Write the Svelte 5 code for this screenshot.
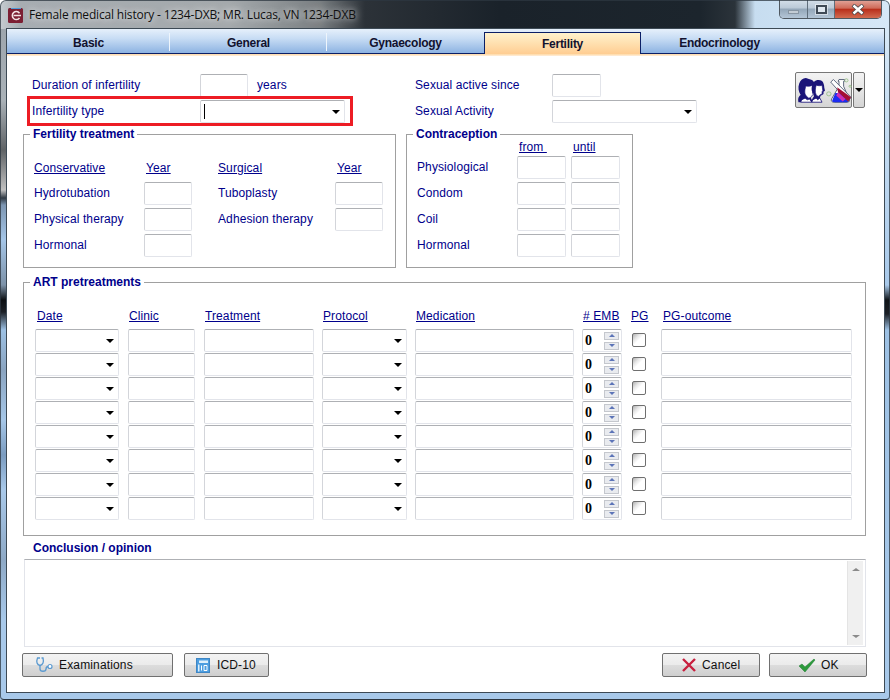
<script lang="ts">
	const treatments = [
		{ name: 'Hydrotubation', surgical: 'Tuboplasty' },
		{ name: 'Physical therapy', surgical: 'Adhesion therapy' },
		{ name: 'Hormonal', surgical: '' }
	];
	const methods = ['Physiological', 'Condom', 'Coil', 'Hormonal'];
	const tabs = ['Basic', 'General', 'Gynaecology', 'Fertility', 'Endocrinology'];
	const artRows = Array.from({ length: 8 }, (_, i) => i);
</script>

{#snippet combo(extra = '')}
	<div class="field combo {extra}"><span class="arrow"></span></div>
{/snippet}

<div class="window">
	<header class="titlebar">
		<svg class="appicon" width="16" height="16" viewBox="0 0 16 16">
			<rect x="0" y="0" width="15" height="15" rx="1.5" fill="#7c1f33" />
			<path d="M3 0h10v1H3z" fill="#4f9bd8" />
			<path d="M11.5 5.2A4 4 0 1 0 11.5 10" fill="none" stroke="#f3e4e6" stroke-width="1.5" />
			<path d="M5.5 7.6H13" stroke="#f3e4e6" stroke-width="1.5" />
		</svg>
		<span class="title">Female medical history - 1234-DXB; MR. Lucas, VN 1234-DXB</span>
		<div class="winbtns">
			<div class="wb min"><span></span></div>
			<div class="wb max"><span></span></div>
			<div class="wb close">
				<svg width="16" height="11" viewBox="0 0 16 11">
					<path d="M3 1l10 9M13 1L3 10" stroke="#47494d" stroke-width="4" />
					<path d="M3.5 1.5l9 8M12.5 1.5l-9 8" stroke="#fff" stroke-width="2.4" />
				</svg>
			</div>
		</div>
	</header>

	<div class="client">
		<nav class="tabs">
			{#each tabs as tab}
				<div class="tab" class:active={tab === 'Fertility'}>{tab}</div>
			{/each}
		</nav>
		<div class="tabline"></div>

		<section class="top">
			<div class="top-left">
				<div class="row">
					<span class="label w168">Duration of infertility</span>
					<div class="field w48"></div>
					<span class="label years">years</span>
				</div>
				<div class="row">
					<span class="label w168">Infertility type</span>
					<div class="field combo w145"><i class="caret"></i><span class="arrow"></span></div>
				</div>
				<div class="highlight"></div>
			</div>
			<div class="top-right">
				<div class="row">
					<span class="label w137">Sexual active since</span>
					<div class="field w49"></div>
				</div>
				<div class="row">
					<span class="label w137">Sexual Activity</span>
					<div class="field combo w145"><span class="arrow"></span></div>
				</div>
			</div>
			<div class="iconbtn">
				<svg width="28" height="26" viewBox="0 0 38 32" preserveAspectRatio="none">
					<path d="M2 31c-1-5 0-7 3-9-3-4-4-9-2-14 2-5 7-8 12-6 3 1 6 1 8 4 1 3 0 6 1 9l-2 1c1 3 0 5-3 6l-2 2c2 2 4 5 4 7z" fill="#1a1478" />
					<path d="M12 11c4 1 7 0 9-1l2 8-2 1 1 3-2 1-1 2-3 1c-2-1-4-3-5-5-1-3 0-7 1-10z" fill="#fff" stroke="#1a1478" stroke-width=".8" />
					<path d="M5 31c1-3 3-4 6-5l3 2 3-1 3 4z" fill="#fff" stroke="#1a1478" />
					<path d="M23 6c3-3 8-3 11-1 2 2 3 5 3 8l1 4-2 1v3l-2 1-2 1-1 3 3 5H20c0-3 1-5 3-7l-1-4c-3-2-3-10 1-14z" fill="#1a1478" />
					<path d="M26 10c3 1 6 1 8 0l1 7-1 1v3l-3 1-2 2-3-2c-2-4-1-8 0-12z" fill="#fff" stroke="#1a1478" stroke-width=".8" />
					<path d="M20 31c1-3 3-4 6-5l2 2 3-2 3 5z" fill="#fff" stroke="#1a1478" />
				</svg>
				<svg class="flask" width="24" height="27" viewBox="0 0 26 32" preserveAspectRatio="none">
					<path d="M13 3h6v2h-1v6l6 15c1 2 0 4-2 4H8c-3 0-4-2-3-4l8-15V5h-1z" fill="#fff" stroke="#3a4660" stroke-width=".9" />
					<path d="M9 19h10l4 8c1 2 0 3-2 3H8c-2 0-3-1-2-3z" fill="#1c2cf0" />
					<path d="M4 6l3-3 19 21-3 5z" fill="#fff" stroke="#3a4660" stroke-width=".9" />
					<path d="M11 12l15 12-3 5-11-11z" fill="#a30f33" />
					<path d="M12 18l8 8-3 3-7-7z" fill="#cf2fb2" />
					<circle cx="2" cy="20" r="2.4" fill="none" stroke="#98c088" />
					<circle cx="21" cy="4" r="1.8" fill="none" stroke="#98c088" />
					<circle cx="25" cy="11" r="1.2" fill="none" stroke="#98c088" />
				</svg>
			</div>
			<div class="iconbtn drop"><span class="arrow"></span></div>
		</section>

		<section class="groups">
			<fieldset class="fert">
				<legend>Fertility treatment</legend>
				<div class="fert-grid">
					<span class="label head">Conservative</span>
					<span class="label head pad">Year</span>
					<span class="label head">Surgical</span>
					<span class="label head pad">Year</span>
					{#each treatments as t}
						<span class="label">{t.name}</span>
						<div class="field"></div>
						<span class="label">{t.surgical}</span>
						{#if t.surgical}
							<div class="field"></div>
						{:else}
							<span></span>
						{/if}
					{/each}
				</div>
			</fieldset>
			<fieldset class="contra">
				<legend>Contraception</legend>
				<div class="contra-grid">
					<span></span>
					<span class="label head pad">from&nbsp;</span>
					<span class="label head pad">until</span>
					{#each methods as m}
						<span class="label">{m}</span>
						<div class="field"></div>
						<div class="field"></div>
					{/each}
				</div>
			</fieldset>
		</section>

		<fieldset class="art">
			<legend>ART pretreatments</legend>
			<div class="art-grid">
				<span class="label head pad">Date</span>
				<span class="label head pad nudge">Clinic</span>
				<span class="label head pad nudge">Treatment</span>
				<span class="label head pad nudge">Protocol</span>
				<span class="label head pad nudge">Medication</span>
				<span class="label head pad nudge">#&nbsp;EMB</span>
				<span class="label head pad">PG</span>
				<span class="label head pad">PG-outcome</span>
				{#each artRows as row (row)}
					{@render combo('w84')}
					<div class="field w67"></div>
					<div class="field w110"></div>
					{@render combo('w85')}
					<div class="field w159"></div>
					<div class="field spin">
						<b>0</b>
						<div class="spinbtns">
							<span class="up"></span>
							<span class="down"></span>
						</div>
					</div>
					<div class="check"></div>
					<div class="field w191"></div>
				{/each}
			</div>
		</fieldset>

		<div class="conclabel">Conclusion / opinion</div>
		<div class="textarea">
			<div class="scroll">
				<span class="sup"></span>
				<span class="sdown"></span>
			</div>
		</div>

		<footer class="actions">
			<button class="btn exam" type="button">
				<svg width="18" height="16" viewBox="0 0 18 16">
					<path d="M5 1H2.5C1 5 2 8 5 8.5 8 8 9 5 8 1H6.5" fill="none" stroke="#5b9ad0" stroke-width="1.3" />
					<path d="M5 8.5V12c0 3 6 3 6 0 0-2 1-2.5 2.5-2.5" fill="none" stroke="#5b9ad0" stroke-width="1.3" />
					<circle cx="15" cy="9.5" r="2" fill="#fff" stroke="#5b9ad0" stroke-width="1.2" />
				</svg>
				Examinations
			</button>
			<button class="btn icd" type="button">
				<svg width="14" height="15" viewBox="0 0 14 15">
					<rect x=".5" y=".5" width="13" height="14" fill="#4d9ee0" stroke="#3f86c4" />
					<rect x="3" y="2.5" width="9" height="2.5" fill="#dff0fb" />
					<rect x="2" y="6.5" width="1.5" height="7" fill="#dff0fb" />
					<path d="M5.5 7.5v5M8 7.5h3v5H8z" fill="none" stroke="#fff" />
				</svg>
				ICD-10
			</button>
			<span class="spacer"></span>
			<button class="btn cancel" type="button">
				<svg width="14" height="14" viewBox="0 0 14 14">
					<path d="M1 1l12 12M13 1L1 13" stroke="#c8203f" stroke-width="2.4" />
				</svg>
				Cancel
			</button>
			<button class="btn ok" type="button">
				<svg width="18" height="14" viewBox="0 0 18 14">
					<path d="M1 8l3-2 3 3 9-8 1 1L7 14z" fill="#2d9a3c" stroke="#1e7d30" stroke-width=".5" />
				</svg>
				OK
			</button>
		</footer>
	</div>
</div>

<style>
	:global(body) {
		margin: 0;
	}

	.window {
		position: relative;
		box-sizing: border-box;
		width: 890px;
		height: 700px;
		overflow: hidden;
		padding: 0 6px 7px 7px;
		border-radius: 6px 6px 0 0;
		font-family: 'Liberation Sans', Arial, sans-serif;
		font-size: 12px;
		color: #00008b;
		background-color: #a8c9ea;
		background-repeat: no-repeat;
		background-position: left top, right top;
		background-size: 7px 100%, 7px 100%;
		background-image:
			linear-gradient(180deg,
				#9ea6ad 30px, #aab2b8 100px, #5f6366 150px, #c0c0c0 190px, #303a44 198px,
				#7d96b2 205px, #a5c6e8 240px, #7d92a8 285px, #0c0f12 300px, #1c2026 312px,
				#9dc1e4 330px, #8aa4c0 370px, #a6c7e8 420px, #7b9cc0 455px, #a9c9ea 490px,
				#8ea9c6 560px, #a8c9ea 620px),
			linear-gradient(180deg,
				#d6e8f7 30px, #b9d4ee 200px, #a8c9ea 285px, #101418 300px, #1c2026 314px,
				#9dc1e4 330px, #a8c9ea 700px);
	}

	.window::after {
		content: '';
		position: absolute;
		inset: 0;
		border: 1px solid rgba(45, 55, 65, .75);
		border-bottom-color: #2d3741;
		border-radius: 6px 6px 4px 4px;
		pointer-events: none;
	}

	.titlebar {
		display: flex;
		align-items: flex-start;
		height: 29px;
		margin: 0 -6px 0 -7px;
		padding-left: 8px;
		background: linear-gradient(90deg,
			#c6ccd1 0, #a7adb2 20px, #a4a9ac 230px, #7a7f82 320px, #2c3238 365px,
			#1a222a 500px, #1c252d 700px, #2b333a 735px, #c7ddf0 755px, #d6e8f7 890px);
	}

	.appicon {
		margin-top: 8px;
		flex: none;
	}

	.title {
		margin: 7px 0 0 5px;
		font-family: 'Open Sans', 'Noto Sans', sans-serif;
		font-size: 12px;
		line-height: 16px;
		color: #101010;
		letter-spacing: -.17px;
		white-space: nowrap;
		text-shadow: 0 0 6px rgba(255,255,255,.7), 0 0 10px rgba(255,255,255,.5);
	}

	.winbtns {
		display: flex;
		margin-left: auto;
		margin-right: 8px;
		height: 19px;
		border: 1px solid #4f5860;
		border-top: 0;
		border-radius: 0 0 5px 5px;
		overflow: hidden;
		box-sizing: border-box;
	}

	.wb {
		display: flex;
		align-items: center;
		justify-content: center;
		box-sizing: border-box;
		height: 100%;
		background: linear-gradient(180deg, #d4dfe9 0, #bac9d7 45%, #93a6b8 50%, #b4c6d6 100%);
		border-right: 1px solid #5f6e7b;
	}

	.min { width: 28px; }
	.min span { width: 11px; height: 4px; margin-top: 5px; background: #c3ccd4; border: 1px solid #8795a2; box-sizing: border-box; }
	.max { width: 27px; }
	.max span { width: 11px; height: 9px; box-sizing: border-box; border: 2px solid #3f4a55; background: #dfe7ee; box-shadow: 0 0 0 1px rgba(255,255,255,.5); }
	.close {
		width: 46px;
		border-right: 0;
		background: linear-gradient(180deg, #e3a79c 0, #cf6b59 45%, #b9301c 52%, #d26b50 100%);
	}

	.client {
		height: 663px;
		background: #fff;
		box-shadow: 0 0 0 1px #3d4a55;
		position: relative;
	}

	.tabs {
		display: flex;
		height: 24px;
		background: linear-gradient(180deg, #e6f0fb 0, #c7dcf4 40%, #8db3e2 100%);
		border-bottom: 1px solid #0b1f66;
		box-sizing: content-box;
	}

	.tab {
		position: relative;
		box-sizing: border-box;
		width: 157px;
		display: flex;
		align-items: center;
		justify-content: center;
		font-weight: bold;
		font-size: 12px;
		letter-spacing: -.25px;
		color: #12122e;
		padding-top: 3px;
	}

	.tab:first-child { width: 163px; }

	.tab:not(.active):not(:last-child)::after {
		content: '';
		position: absolute;
		right: 0;
		top: 4px;
		bottom: 2px;
		width: 1px;
		background: #eef5fc;
	}

	.tab:nth-child(3)::after { display: none; }

	.tab.active {
		margin: 3px 0 -1px;
		height: 22px;
		padding-top: 0;
		border: 1px solid #0b1f66;
		border-bottom: 0;
		background: linear-gradient(180deg, #fff2cc 0, #ffcd92 100%);
	}

	.tabline {
		height: 2px;
		background: linear-gradient(180deg, #ffd9a3, #ffeedd);
	}

	.top {
		display: flex;
		align-items: flex-start;
		padding: 18px 0 0 25px;
	}

	.top-left {
		position: relative;
		width: 383px;
		flex: none;
	}

	.top-right {
		width: 380px;
		flex: none;
	}

	.row {
		display: flex;
		align-items: center;
		height: 23px;
		margin-bottom: 3px;
	}

	.label {
		padding-bottom: 2px;
		line-height: 14px;
		letter-spacing: .1px;
		white-space: nowrap;
	}

	.w168 { width: 168px; }
	.w137 { width: 137px; }
	.years { margin-left: 9px; }

	.highlight {
		position: absolute;
		left: -5px;
		top: 22px;
		width: 326px;
		height: 30px;
		box-sizing: border-box;
		border: 3px solid #ed1c24;
		pointer-events: none;
	}

	.field {
		box-sizing: border-box;
		height: 23px;
		background: #fff;
		border: 1px solid #e2e4ea;
		border-top-color: #aeb0b4;
		border-left-color: #d3d5da;
		border-radius: 2px;
	}

	.w48 { width: 48px; }
	.w49 { width: 49px; }
	.w67 { width: 67px; }
	.w84 { width: 84px; }
	.w85 { width: 85px; }
	.w110 { width: 110px; }
	.w145 { width: 145px; }
	.w159 { width: 159px; }
	.w191 { width: 191px; }

	.combo {
		position: relative;
		display: flex;
		align-items: center;
		justify-content: flex-end;
		padding-right: 4px;
	}

	.arrow {
		width: 0;
		height: 0;
		border: 4px solid transparent;
		border-top: 4px solid #000;
		border-bottom: 0;
	}

	.caret {
		position: absolute;
		left: 3px;
		top: 3px;
		width: 1px;
		height: 15px;
		background: #000;
	}

	.iconbtn {
		box-sizing: border-box;
		width: 57px;
		height: 36px;
		margin-top: -2px;
		display: flex;
		align-items: center;
		padding-left: 1px;
		border: 1px solid #777;
		border-radius: 2px;
		background: linear-gradient(180deg, #f3f3f3 0, #e6e6e6 50%, #d4d4d4 100%);
	}

	.iconbtn svg {
		flex: none;
		overflow: visible;
	}

	.flask {
		margin-left: 2px;
	}

	.iconbtn.drop {
		width: 12px;
		margin-left: 1px;
		padding: 0;
		justify-content: center;
	}

	.groups {
		display: flex;
		gap: 10px;
		margin: 1px 0 0 16px;
	}

	fieldset {
		box-sizing: border-box;
		margin: 0;
		padding: 0;
		min-width: 0;
		border: 1px solid #a0a0a0;
	}

	legend {
		margin-left: 6px;
		padding: 0 3px;
		font-weight: bold;
		font-size: 12px;
		line-height: 14px;
		color: #00008b;
	}

	.fert {
		width: 373px;
		height: 141px;
		padding-top: 15px;
	}

	.fert-grid {
		display: grid;
		grid-template-columns: 110px 48px 143px 48px;
		grid-auto-rows: 23px;
		row-gap: 3px;
		align-items: center;
		margin-left: 10px;
	}

	.fert-grid > :nth-child(4n + 3) {
		margin-left: 26px;
	}

	.fert-grid .field {
		width: 48px;
	}

	.head {
		padding-bottom: 0;
		text-decoration: underline;
	}

	.pad {
		padding-left: 2px;
	}

	.pad.nudge {
		padding-left: 1px;
	}

	.contra {
		width: 227px;
		height: 141px;
	}

	.contra-grid {
		display: grid;
		grid-template-columns: 95px 49px 49px;
		column-gap: 5px;
		grid-template-rows: 13px repeat(4, 23px);
		row-gap: 3px;
		align-items: center;
		margin: -1px 0 0 10px;
	}

	.art {
		width: 843px;
		height: 261px;
		margin: 7px 0 0 16px;
		padding-top: 21px;
	}

	.art-grid {
		display: grid;
		grid-template-columns: 93px 76px 118px 93px 167px 47px 32px 191px;
		grid-template-rows: 18px repeat(8, 23px);
		row-gap: 1px;
		align-items: center;
		margin-left: 11px;
	}

	.art-grid .head {
		align-self: start;
		margin-top: -1px;
	}

	.spin {
		width: 40px;
		display: flex;
		align-items: center;
		justify-content: space-between;
		padding: 0 2px;
		font-family: 'Liberation Serif', serif;
		font-size: 14px;
		color: #000;
	}

	.spinbtns {
		display: flex;
		flex-direction: column;
		gap: 2px;
	}

	.up, .down {
		display: flex;
		align-items: center;
		justify-content: center;
		box-sizing: border-box;
		width: 15px;
		height: 8px;
		background: #e9ebef;
		border: 1px solid #c4c7cd;
	}

	.up::after, .down::after {
		content: '';
		border: 3px solid transparent;
	}

	.up::after {
		border-bottom: 3px solid #5c74b8;
		border-top: 0;
	}

	.down::after {
		border-top: 3px solid #5c74b8;
		border-bottom: 0;
	}

	.check {
		box-sizing: border-box;
		width: 14px;
		height: 14px;
		margin: 0 0 2px 3px;
		border: 1px solid #6f6f6f;
		border-radius: 2px;
		background: linear-gradient(135deg, #b0b0b0 0, #e8e8e8 30%, #fff 50%);
	}

	.conclabel {
		margin: 5px 0 4px 26px;
		font-weight: bold;
		line-height: 14px;
	}

	.textarea {
		position: relative;
		box-sizing: border-box;
		width: 842px;
		height: 88px;
		margin-left: 17px;
		border: 1px solid #e2e4ea;
		border-top-color: #aeb0b4;
		padding: 1px;
		display: flex;
		justify-content: flex-end;
	}

	.scroll {
		box-sizing: border-box;
		width: 16px;
		height: 100%;
		background: #f0f0f0;
		border-left: 1px solid #e4e4e4;
		display: flex;
		flex-direction: column;
		justify-content: space-between;
		align-items: center;
		padding: 7px 0;
		margin-right: 1px;
	}

	.sup, .sdown {
		border: 4px solid transparent;
	}

	.sup {
		border-top: 0;
		border-bottom: 3px solid #8a8a8a;
	}

	.sdown {
		border-bottom: 0;
		border-top: 3px solid #8a8a8a;
	}

	.actions {
		display: flex;
		margin: 6px 0 0 15px;
		width: 845px;
		height: 24px;
	}

	.spacer {
		flex: 1;
	}

	.btn {
		box-sizing: border-box;
		height: 24px;
		display: flex;
		align-items: center;
		border: 1px solid #707070;
		border-radius: 2px;
		padding: 0;
		font-family: 'Liberation Sans', Arial, sans-serif;
		font-size: 12px;
		letter-spacing: .15px;
		color: #101010;
		background: linear-gradient(180deg, #f3f3f3 0, #ebebeb 48%, #dcdcdc 52%, #cfcfcf 100%);
	}

	.exam { width: 151px; padding-left: 12px; gap: 6px; }
	.icd { width: 85px; margin-left: 11px; padding-left: 11px; gap: 7px; }
	.cancel { width: 98px; padding-left: 19px; gap: 6px; }
	.ok { width: 98px; margin-left: 9px; padding-left: 28px; gap: 5px; }
</style>
